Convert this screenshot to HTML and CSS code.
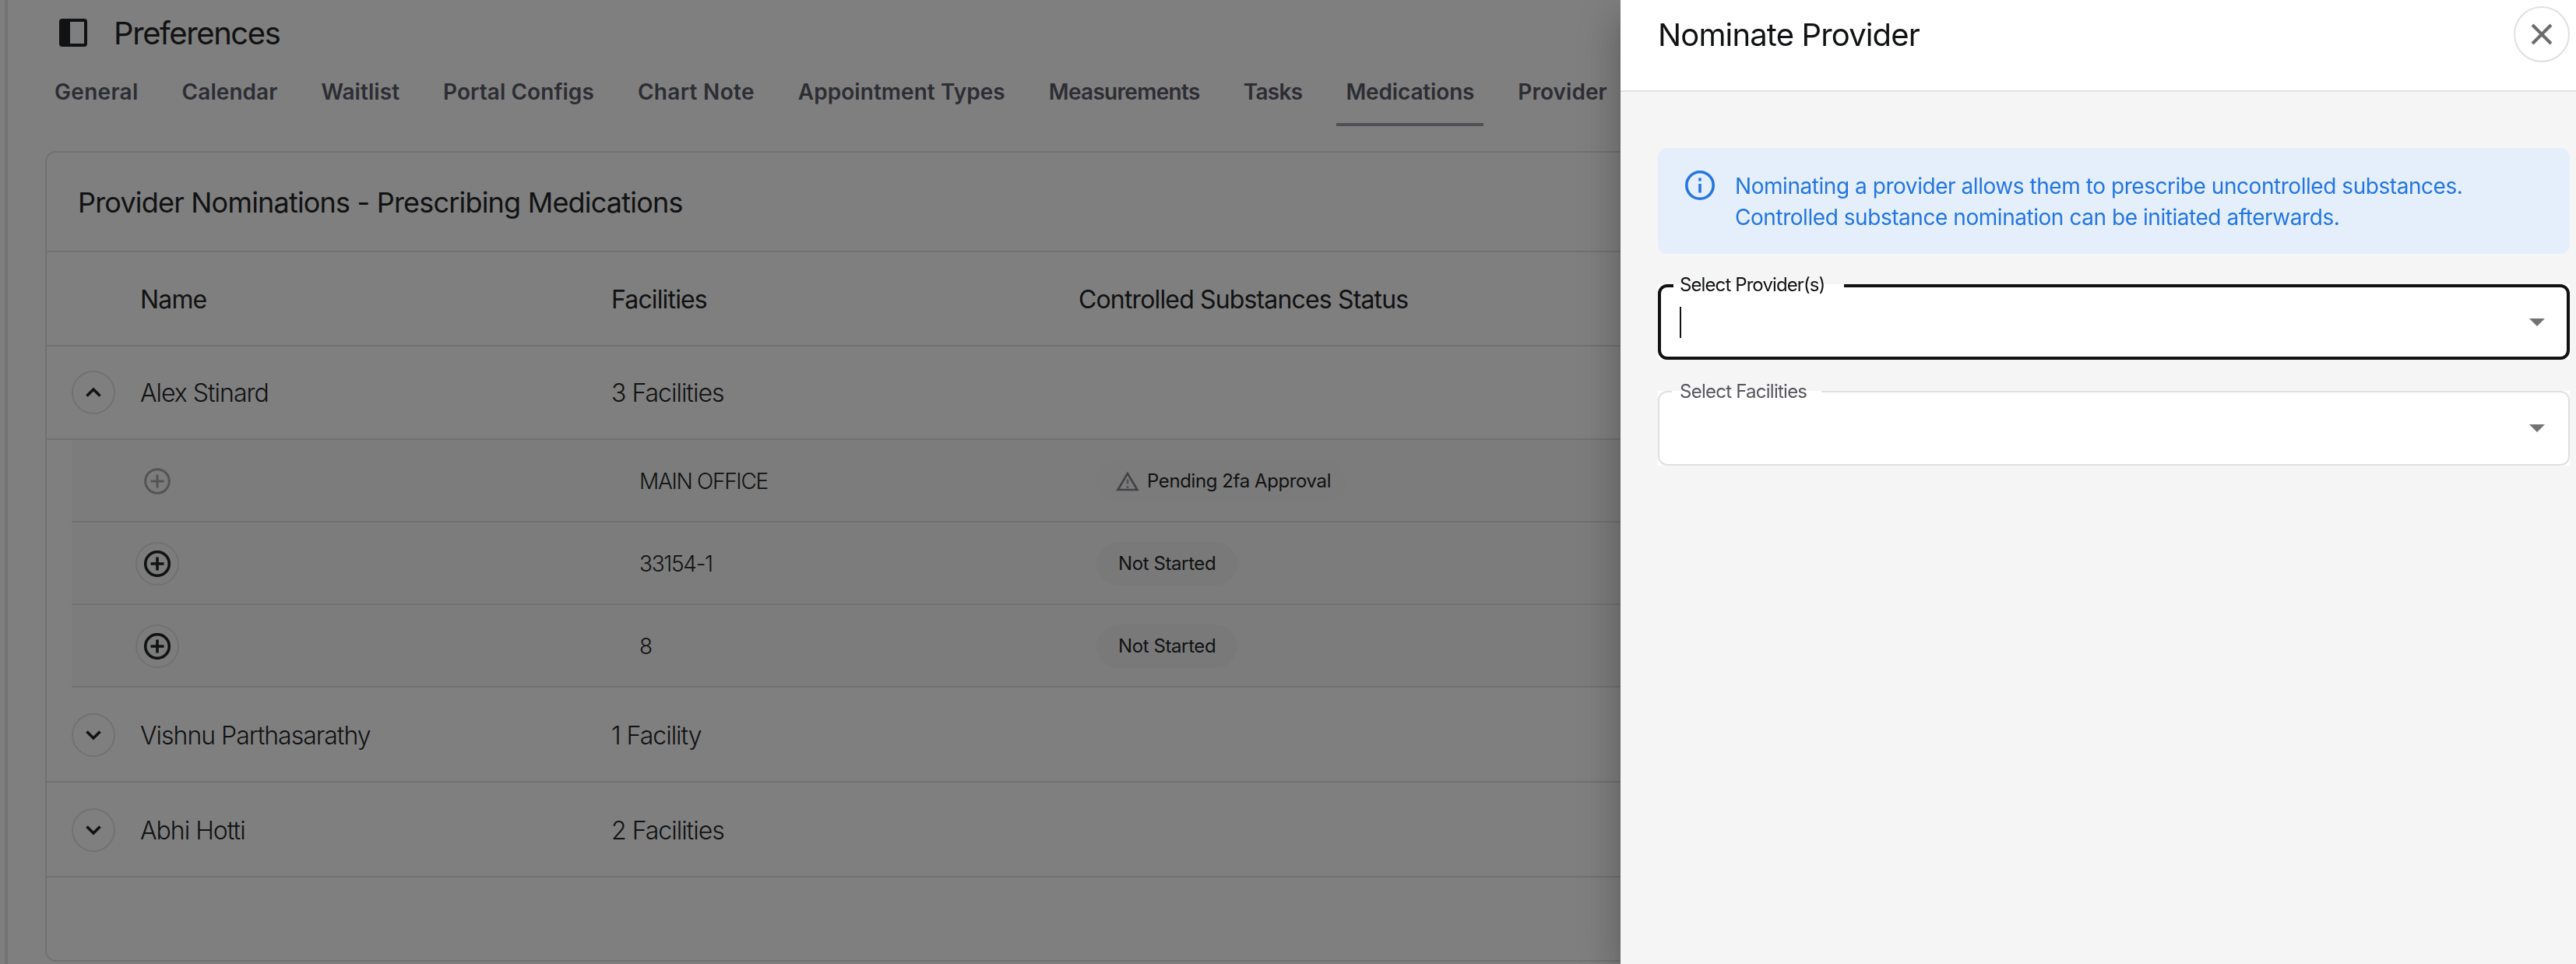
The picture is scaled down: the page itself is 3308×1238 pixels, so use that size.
FILE: index.html
```html
<!DOCTYPE html>
<html lang="en">
<head>
  <meta charset="UTF-8">
  <title>Preferences</title>
  <link rel="stylesheet" href="styles.css">
</head>
<body>
  <div class="page">
    <header class="page-header">
      <svg class="sidebar-icon" viewBox="0 0 36 36">
        <rect x="0" y="0" width="36" height="36" rx="4" fill="#222426"/>
        <rect x="14" y="4" width="18" height="28" fill="#fff"/>
      </svg>
      <h1>Preferences</h1>
    </header>

    <nav class="tabs">
      <a class="tab wide">General</a>
      <a class="tab">Calendar</a>
      <a class="tab">Waitlist</a>
      <a class="tab">Portal Configs</a>
      <a class="tab wide">Chart Note</a>
      <a class="tab">Appointment Types</a>
      <a class="tab narrow">Measurements</a>
      <a class="tab narrow">Tasks</a>
      <a class="tab active">Medications</a>
      <a class="tab">Provider</a>
    </nav>

    <section class="card">
      <h2 class="card-title">Provider Nominations - Prescribing Medications</h2>

      <div class="row head">
        <span></span>
        <span>Name</span>
        <span>Facilities</span>
        <span>Controlled Substances Status</span>
      </div>

      <div class="row open">
        <button class="round"><svg viewBox="0 0 24 14"><path d="M3.5 11.5 12 3l8.5 8.5"/></svg></button>
        <span>Alex Stinard</span>
        <span>3 Facilities</span>
      </div>

      <div class="nested">
        <div class="subrow">
          <button class="round plain"><svg class="plus" viewBox="0 0 34 34"><circle cx="17" cy="17" r="15.3"/><path d="M17 8.5v17M8.5 17h17"/></svg></button>
          <span>MAIN OFFICE</span>
          <span class="chip pending">
            <svg class="warning" viewBox="0 0 30 26"><path d="M15 3 27.5 24H2.500z"/><path class="mark" d="M15 10.5v6M15 19v3"/></svg>
            Pending 2fa Approval
          </span>
        </div>
        <div class="subrow">
          <button class="round"><svg class="plus" viewBox="0 0 34 34"><circle cx="17" cy="17" r="15.3"/><path d="M17 8.5v17M8.5 17h17"/></svg></button>
          <span>33154-1</span>
          <span class="chip">Not Started</span>
        </div>
        <div class="subrow">
          <button class="round"><svg class="plus" viewBox="0 0 34 34"><circle cx="17" cy="17" r="15.3"/><path d="M17 8.5v17M8.5 17h17"/></svg></button>
          <span>8</span>
          <span class="chip">Not Started</span>
        </div>
      </div>

      <div class="row">
        <button class="round"><svg viewBox="0 0 24 14"><path d="M3.5 2.5 12 11l8.5-8.5"/></svg></button>
        <span>Vishnu Parthasarathy</span>
        <span>1 Facility</span>
      </div>
      <div class="row">
        <button class="round"><svg viewBox="0 0 24 14"><path d="M3.5 2.5 12 11l8.5-8.5"/></svg></button>
        <span>Abhi Hotti</span>
        <span>2 Facilities</span>
      </div>
    </section>
  </div>

  <div class="backdrop"></div>

  <aside class="drawer">
    <header class="drawer-header">
      <h2>Nominate Provider</h2>
      <button class="close"><svg viewBox="0 0 28 28"><path d="M2 2l24 24M26 2 2 26"/></svg></button>
    </header>
    <div class="drawer-body">
      <div class="info">
        <svg viewBox="0 0 38 38"><circle cx="19" cy="19" r="17.2"/><path d="M19 9.5v4M19 17v11.5"/></svg>
        <p>Nominating a provider allows them to prescribe uncontrolled substances.<br>Controlled substance nomination can be initiated afterwards.</p>
      </div>
      <div class="field focused">
        <div class="outline">
          <label>Select Provider(s)</label>
          <i class="caret"></i>
          <svg class="arrow" viewBox="0 0 20 10"><path d="M0 0h20L10 10z"/></svg>
        </div>
      </div>
      <div class="field">
        <div class="outline">
          <label>Select Facilities</label>
          <svg class="arrow" viewBox="0 0 20 10"><path d="M0 0h20L10 10z"/></svg>
        </div>
      </div>
    </div>
  </aside>
</body>
</html>
```

FILE: styles.css
```css
* {
  box-sizing: border-box;
}
body {
  margin: 0;
  height: 1238px;
  overflow: hidden;
  background: #fff;
  color: #222426;
  font-family: Inter, "Liberation Sans", sans-serif;
}
h1, h2, p {
  margin: 0;
}
button {
  padding: 0;
  background: none;
  cursor: pointer;
}
svg {
  display: block;
  fill: none;
}

.page {
  margin-left: 6px;
  height: 1238px;
  border-left: 4px solid #e6e6e6;
  padding: 0 28px 0 48px;
}
.page-header {
  display: flex;
  align-items: center;
  gap: 34px;
  height: 84px;
  padding-left: 18px;
}
.sidebar-icon {
  width: 36px;
  height: 36px;
}
h1 {
  font-size: 40px;
  font-weight: 400;
  letter-spacing: -1.4px;
}

.tabs {
  display: flex;
  gap: 32px;
  height: 78px;
  margin-bottom: 32px;
  white-space: nowrap;
}
.tab {
  height: 78px;
  padding: 0 12px;
  border-bottom: 4px solid transparent;
  line-height: 68px;
  font-size: 28px;
  font-weight: 600;
  letter-spacing: 0.05px;
  color: #5b5b69;
}
.tab.wide {
  letter-spacing: 0.3px;
}
.tab.narrow {
  letter-spacing: -0.7px;
}
.tab.active {
  border-color: #a09fa9;
  letter-spacing: -0.15px;
}

.card {
  height: 1041px;
  border: 2px solid #e2e2e2;
  border-radius: 14px;
}
.card-title {
  height: 128px;
  padding-left: 40px;
  border-bottom: 2px solid #e2e2e2;
  line-height: 128px;
  font-size: 36px;
  font-weight: 400;
  letter-spacing: -0.8px;
}
.row {
  display: grid;
  grid-template-columns: 120px 605px 600px 1fr;
  align-items: center;
  height: 122px;
  padding-top: 2px;
  border-bottom: 2px solid #e2e2e2;
  font-size: 32px;
  font-weight: 300;
  letter-spacing: -1px;
}
.row.head {
  height: 121px;
  font-weight: 400;
  letter-spacing: -0.85px;
}
.row.open {
  height: 120px;
  padding-top: 0;
}
.round {
  display: flex;
  align-items: center;
  justify-content: center;
  width: 56px;
  height: 56px;
  margin-left: 32px;
  border: 2px solid #e2e2e2;
  border-radius: 50%;
}
.round svg {
  width: 24px;
  height: 14px;
  stroke: #222426;
  stroke-width: 3.6;
}

.nested {
  margin-left: 32px;
  background: #f9f9f9;
}
.subrow {
  display: grid;
  grid-template-columns: 729px 587px 1fr;
  align-items: center;
  height: 106px;
  padding-top: 1px;
  border-bottom: 2px solid #e2e2e2;
  font-size: 28px;
  font-weight: 300;
  letter-spacing: -1.3px;
}
.subrow .round {
  margin-left: 82px;
}
.round.plain {
  border-color: transparent;
}
.round .plus {
  width: 34px;
  height: 34px;
}
.plain .plus {
  stroke: #a8a8a8;
  stroke-width: 3;
}
.chip {
  justify-self: start;
  display: flex;
  align-items: center;
  gap: 10px;
  height: 56px;
  padding: 0 28px;
  border-radius: 28px;
  background: #f3f3f3;
  font-size: 24px;
  font-weight: 400;
  letter-spacing: -0.4px;
}
.chip.pending {
  height: 54px;
  padding: 0 20px 0 25px;
  background: #f7f7f7;
}
.warning {
  width: 30px;
  height: 26px;
  stroke: #85858f;
  stroke-width: 2.6;
}
.mark {
  stroke: #a5a5ad;
}

.backdrop {
  position: fixed;
  inset: 0;
  background: rgba(0, 0, 0, 0.5);
}

.drawer {
  position: fixed;
  top: 0;
  right: 0;
  bottom: 0;
  width: 1227px;
  background: #f5f5f5;
  color: #101213;
  box-shadow: 0 16px 20px -10px rgba(0, 0, 0, 0.2), 0 32px 48px 4px rgba(0, 0, 0, 0.14), 0 12px 60px 10px rgba(0, 0, 0, 0.12);
}
.drawer-header {
  display: flex;
  justify-content: space-between;
  height: 118px;
  padding: 8px 8px 0 48px;
  border-bottom: 2px solid #e0e0e0;
  background: #fff;
}
.drawer-header h2 {
  line-height: 74px;
  font-size: 40px;
  font-weight: 400;
  letter-spacing: -0.85px;
}
.close {
  display: flex;
  align-items: center;
  justify-content: center;
  width: 72px;
  height: 72px;
  border: 2px solid #e0e0e0;
  border-radius: 50%;
}
.close svg {
  width: 28px;
  height: 28px;
  stroke: #6c6c6c;
  stroke-width: 4;
}
.drawer-body {
  padding: 72px 8px 0 48px;
}
.info {
  display: flex;
  gap: 26px;
  height: 136px;
  margin-bottom: 39px;
  padding: 29px 35px;
  border-radius: 12px;
  background: #e5effc;
  color: #2375e1;
}
.info svg {
  width: 38px;
  height: 38px;
  stroke: #2375e1;
  stroke-width: 3.6;
}
.info p {
  line-height: 40px;
  font-size: 28px;
  font-weight: 400;
  letter-spacing: -0.45px;
  white-space: nowrap;
}

/* outlined selects, the label sits in a gap of the top border */
.field {
  height: 96px;
  margin-bottom: 40px;
  background: #fff;
}
.outline {
  position: relative;
  display: flex;
  align-items: center;
  height: 96px;
  padding: 0 30px 0 26px;
  border: 2px solid #e0e0e0;
  border-radius: 12px;
}
.focused {
  height: 97px;
}
.focused .outline {
  height: 97px;
  padding: 0 28px 0 24px;
  border: 4px solid #101213;
}
.field label {
  position: absolute;
  top: -2px;
  left: 16px;
  width: 192px;
  height: 2px;
  padding-left: 10px;
  background: #fff;
  line-height: 2px;
  font-size: 24px;
  letter-spacing: -0.75px;
  color: #55555e;
  white-space: nowrap;
}
.focused label {
  top: -4px;
  width: 219px;
  height: 4px;
  padding-left: 8px;
  letter-spacing: -0.9px;
  color: #101213;
}
.caret {
  width: 2px;
  height: 40px;
  background: #101213;
}
.arrow {
  width: 20px;
  height: 10px;
  margin-left: auto;
  fill: #737373;
}
```
